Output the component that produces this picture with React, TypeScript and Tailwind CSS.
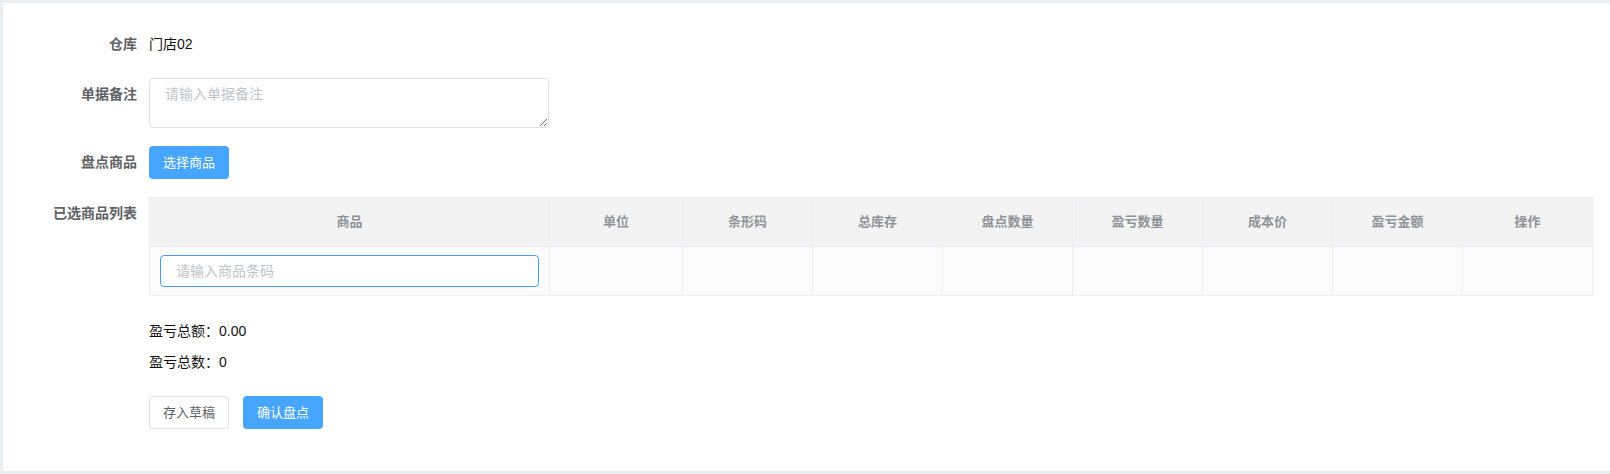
import React from "react";

const font = { fontFamily: '"Liberation Sans", "Noto Sans CJK SC", sans-serif' };

const columns = ["单位", "条形码", "总库存", "盘点数量", "盈亏数量", "成本价", "盈亏金额", "操作"];

function FormRow({ label, children }: { label: string; children: React.ReactNode }) {
  return (
    <div className="flex items-start">
      <div className="w-[120px] shrink-0 pr-3 text-right text-[14px] font-bold leading-8 text-[#606266]">
        {label}
      </div>
      <div className="min-w-0 flex-1">{children}</div>
    </div>
  );
}

function cellClass(i: number) {
  return (
    (i === 0 ? "w-[133px] shrink-0 " : "flex-1 ") +
    (i < columns.length - 1 ? "border-r border-[#ebeef5]" : "")
  );
}

export default function App() {
  return (
    <div className="h-[474px] w-[1610px] bg-[#e9eef3] pl-[3px] pt-[3px] pb-[3px]" style={font}>
      <div className="flex h-full flex-col gap-[18px] bg-white pl-[26px] pr-[17px] pt-[25px]">
        <FormRow label="仓库">
          <span className="text-[14px] leading-8 text-[#111]">门店02</span>
        </FormRow>

        <FormRow label="单据备注">
          <textarea
            placeholder="请输入单据备注"
            className="block h-[50px] w-[400px] rounded-[4px] border border-[#dcdfe6] px-[15px] py-[5px] text-[14px] leading-5 text-[#606266] outline-none placeholder:text-[#c0c4cc]"
          />
        </FormRow>

        <FormRow label="盘点商品">
          <button className="h-[33px] w-[80px] rounded-[4px] bg-[#46a6ff] text-[13px] text-white">
            选择商品
          </button>
        </FormRow>

        <FormRow label="已选商品列表">
          <div className="flex w-[1444px] flex-col border border-[#ebeef5]">
            <div className="flex h-[48px] bg-[#f3f3f4] text-[13px] font-bold text-[#909399]">
              <div className="flex w-[400px] shrink-0 items-center justify-center border-r border-[#ebeef5]">
                商品
              </div>
              {columns.map((c, i) => (
                <div key={c} className={"flex items-center justify-center " + cellClass(i)}>
                  {c}
                </div>
              ))}
            </div>
            <div className="flex h-[49px] border-t border-[#ebeef5] bg-[#fcfcfc]">
              <div className="flex w-[400px] shrink-0 items-center border-r border-[#ebeef5] px-[10px]">
                <input
                  placeholder="请输入商品条码"
                  className="h-[32px] w-full rounded-[4px] border border-[#409eff] bg-white px-[15px] text-[14px] text-[#606266] outline-none placeholder:text-[#c0c4cc]"
                />
              </div>
              {columns.map((c, i) => (
                <div key={c} className={cellClass(i)} />
              ))}
            </div>
          </div>

          <div className="mt-[25px] flex flex-col gap-[11px] text-[14px] leading-5 text-[#111]">
            <div>盈亏总额：0.00</div>
            <div>盈亏总数：0</div>
          </div>

          <div className="mt-[24px] flex gap-[14px]">
            <button className="h-[33px] w-[80px] rounded-[4px] border border-[#dcdfe6] bg-white text-[13px] text-[#606266]">
              存入草稿
            </button>
            <button className="h-[33px] w-[80px] rounded-[4px] bg-[#46a6ff] text-[13px] text-white">
              确认盘点
            </button>
          </div>
        </FormRow>
      </div>
    </div>
  );
}
